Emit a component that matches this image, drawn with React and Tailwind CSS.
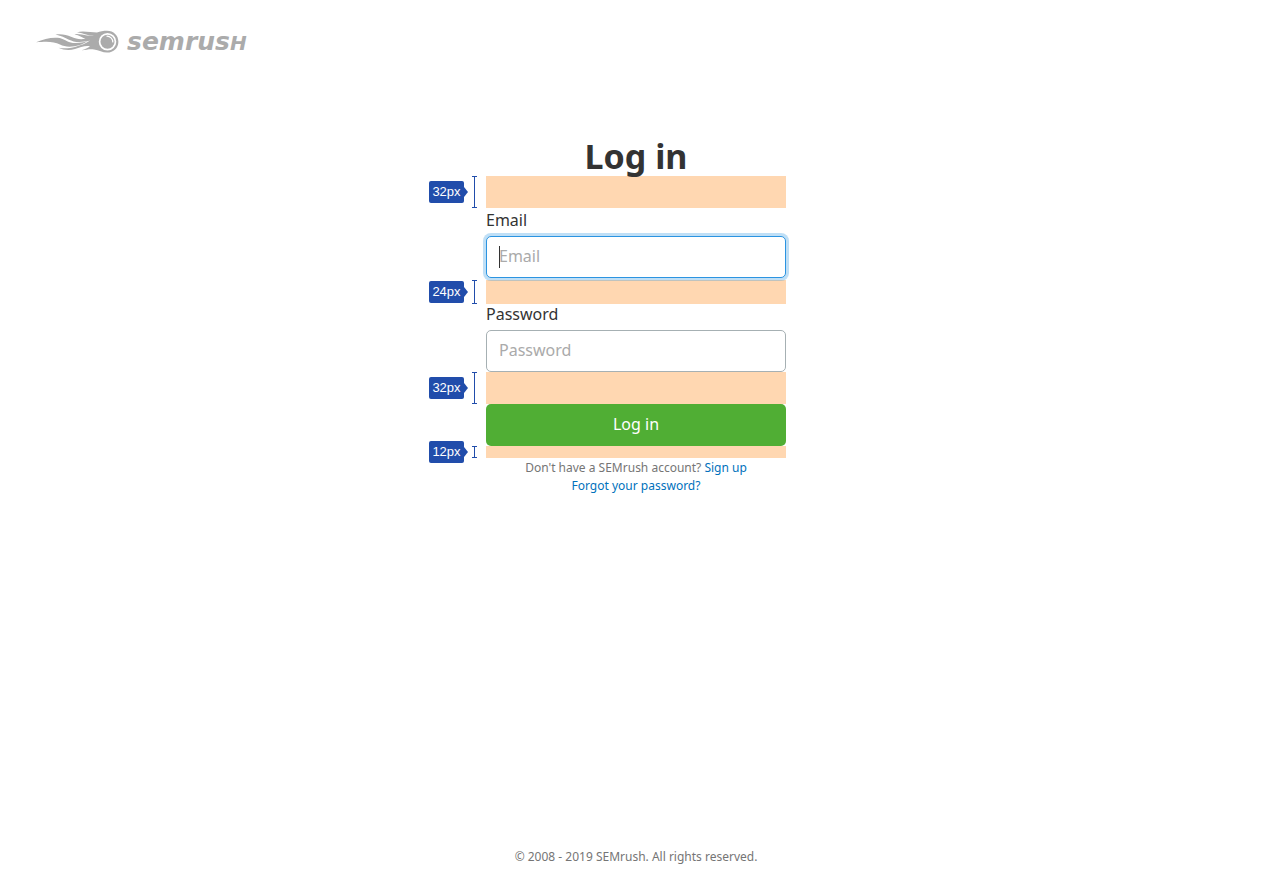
import React from "react";

function Logo() {
  return (
    <a href="#home" aria-label="SEMrush" className="flex h-6 items-center gap-2 text-[#ababab]">
      <svg width="83" height="24" viewBox="0 0 83 24" fill="none" aria-hidden="true">
        <g fill="currentColor">
          <path d="M0 12.300C7 9.400 15 7.200 21.500 7.800C28 8.400 31 12.300 37 12.900C42 13.300 47 12.600 51 11.600C48 14 43 15.400 38.500 16.200C33 17.200 28 16.600 24 14.600C18 11.600 12 11.200 0 12.300Z" />
          <path d="M19.500 4.600C26 3.800 31 5.200 35 6.800C40 8.800 44 10 49.500 8.800C46 7.600 43.500 5.400 38.500 4.200C42 3.600 47 4.800 51 5.600C54 6.200 56 6.200 58 5.800C52 5.600 48.500 3.600 41 2.200C47 .600 55 2.400 61 2.600C64 1.300 67.500 .800 71 .800C77.600 .800 82.400 5.600 82.400 11.700C82.400 17.800 77.600 22.600 71 22.600C66.500 22.600 63 20 58 19.400C54 18.800 50 19.800 45.500 20.200C49 19.200 52 18 54 16.200C49 15.200 44 17.400 39 19C34 20.600 28 20.400 22.500 17.800C28 18.800 34 18.400 39 16.900C45 15.300 50 13.500 54 10.600C48 12.200 42 12.500 37.500 11.400C31 9.800 27 6 19.500 4.600Z" />
        </g>
        <circle cx="71.500" cy="11.800" r="7.900" stroke="white" strokeWidth="1.700" />
        <path d="M71 6.200A5.800 5.800 0 0 1 76.800 12" stroke="white" strokeWidth="1.200" strokeLinecap="round" />
      </svg>
      <span className="flex items-baseline font-['DejaVu_Sans'] font-bold italic leading-6">
        <span className="text-[25px]">semrus</span>
        <span className="text-[20px]">H</span>
      </span>
    </a>
  );
}

const spacerHeights = { 12: "h-3", 24: "h-6", 32: "h-8" };

function Spacer({ size }) {
  return (
    <div className={`relative bg-[#ffd7b1] ${spacerHeights[size]}`}>
      <div className="absolute inset-y-0 right-full mr-[9px] flex items-center gap-1">
        <div className="flex items-center">
          <span className="flex h-[22px] w-[35px] items-center justify-center rounded-xs bg-[#214dab] font-['Liberation_Sans'] text-[13px] text-white">
            {size}px
          </span>
          <svg width="4" height="10" viewBox="0 0 4 10" aria-hidden="true">
            <path d="M0 0L4 5L0 10Z" fill="#214dab" />
          </svg>
        </div>
        <span className="flex w-[5px] justify-center self-stretch border-y border-[#214dab]">
          <span className="w-px bg-[#214dab]" />
        </span>
      </div>
    </div>
  );
}

export default function App() {
  return (
    <div className="flex min-h-screen flex-col bg-white pr-0.5 font-['Noto_Sans',sans-serif] text-[#333]">
      <header className="px-9 pt-[30px]">
        <Logo />
      </header>
      <main className="mx-auto w-full max-w-[300px] grow pt-[82px]">
        <h1 className="relative z-10 text-center text-[34px] font-bold leading-10">Log in</h1>
        <form onSubmit={(e) => e.preventDefault()}>
          <Spacer size={32} />
          <label htmlFor="email" className="mt-0.5 mb-1.5 block text-base leading-5">Email</label>
          <div className="relative z-10 mb-0.5">
            <input
              id="email"
              type="email"
              placeholder="Email"
              className="block h-[42px] w-full rounded-[5px] border border-[#2b94e1] bg-white px-3 pb-0.5 text-base shadow-[0_0_0_3px_rgba(43,148,225,0.3)] outline-none placeholder:text-[#aaa]"
            />
            <span className="absolute top-2.5 left-[13px] h-[22px] w-px bg-[#333]" />
          </div>
          <Spacer size={24} />
          <label htmlFor="password" className="mb-1.5 block text-base leading-5">Password</label>
          <input
            id="password"
            type="password"
            placeholder="Password"
            className="block h-[42px] w-full rounded-[5px] border border-[#a6b0b3] bg-white px-3 pb-0.5 text-base outline-none placeholder:text-[#aaa]"
          />
          <Spacer size={32} />
          <button type="submit" className="block h-[42px] w-full rounded-[5px] bg-[#50ae34] pb-0.5 text-base text-white">
            Log in
          </button>
          <Spacer size={12} />
        </form>
        <div className="pt-px text-center text-xs leading-[18px] text-[#757575]">
          <p>
            Don't have a SEMrush account? <a href="#signup" className="text-[#0071bc]">Sign up</a>
          </p>
          <p>
            <a href="#forgot" className="text-[#0071bc]">Forgot your password?</a>
          </p>
        </div>
      </main>
      <footer className="pb-[26px] text-center text-xs leading-[18px] text-[#757575]">
        © 2008 - 2019 SEMrush. All rights reserved.
      </footer>
    </div>
  );
}
